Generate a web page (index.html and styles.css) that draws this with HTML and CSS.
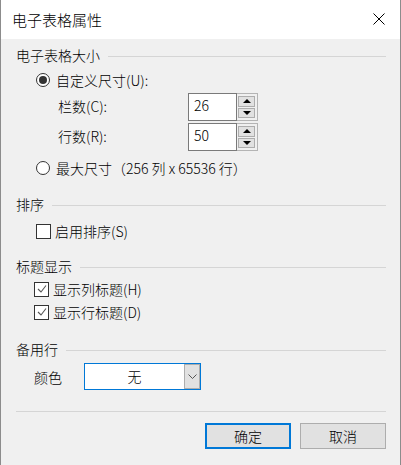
FILE: index.html
```html
<!DOCTYPE html>
<html lang="zh-CN">
<head>
<meta charset="utf-8">
<link rel="stylesheet" href="styles.css">
</head>
<body>
<div class="window">
  <div class="titlebar">
    <span class="title">电子表格属性</span>
    <svg class="close" width="12" height="12" viewBox="0 0 12 12"><path d="M0.5 0.5 L11.5 11.5 M11.5 0.5 L0.5 11.5" stroke="#000" stroke-width="1" fill="none"/></svg>
  </div>
  <div class="content">
    <div class="group-head h1"><span>电子表格大小</span><div class="rule"></div></div>
    <div class="row radio-row r1"><span class="radio checked"></span><span>自定义尺寸(U):</span></div>
    <div class="row spin-row s1">
      <span class="spin-label">栏数(C):</span>
      <div class="spinner">
        <div class="spin-text">26</div>
        <div class="spin-btns">
          <div class="spin-btn"><svg width="8" height="4" viewBox="0 0 8 4"><path d="M0 4 L4 0 L8 4 Z" fill="#000"/></svg></div>
          <div class="spin-btn"><svg width="8" height="4" viewBox="0 0 8 4"><path d="M0 0 L4 4 L8 0 Z" fill="#000"/></svg></div>
        </div>
      </div>
    </div>
    <div class="row spin-row s2">
      <span class="spin-label">行数(R):</span>
      <div class="spinner">
        <div class="spin-text">50</div>
        <div class="spin-btns">
          <div class="spin-btn"><svg width="8" height="4" viewBox="0 0 8 4"><path d="M0 4 L4 0 L8 4 Z" fill="#000"/></svg></div>
          <div class="spin-btn"><svg width="8" height="4" viewBox="0 0 8 4"><path d="M0 0 L4 4 L8 0 Z" fill="#000"/></svg></div>
        </div>
      </div>
    </div>
    <div class="row radio-row r2"><span class="radio"></span><span>最大尺寸（256 列 x 65536 行）</span></div>

    <div class="group-head h2"><span>排序</span><div class="rule"></div></div>
    <div class="row check-row c1"><span class="check"></span><span>启用排序(S)</span></div>

    <div class="group-head h3"><span>标题显示</span><div class="rule"></div></div>
    <div class="row check-row c2">
      <span class="check"><svg width="12" height="12" viewBox="0 0 12 12"><path d="M2 6 L5 9 L10 2.5" stroke="#555" stroke-width="1.1" fill="none"/></svg></span><span>显示列标题(H)</span>
    </div>
    <div class="row check-row c3">
      <span class="check"><svg width="12" height="12" viewBox="0 0 12 12"><path d="M2 6 L5 9 L10 2.5" stroke="#555" stroke-width="1.1" fill="none"/></svg></span><span>显示行标题(D)</span>
    </div>

    <div class="group-head h4"><span>备用行</span><div class="rule"></div></div>
    <div class="row color-row">
      <span class="color-label">颜色</span>
      <div class="combo">
        <div class="combo-text">无</div>
        <div class="combo-btn"><svg width="9" height="5" viewBox="0 0 9 5"><path d="M0.5 0.5 L4.5 4.5 L8.5 0.5" stroke="#555" stroke-width="1" fill="none"/></svg></div>
      </div>
    </div>

    <div class="sep"></div>
    <div class="buttons">
      <div class="btn default">确定</div>
      <div class="btn">取消</div>
    </div>
  </div>
</div>
</body>
</html>
```

FILE: styles.css
```css
html, body {
  margin: 0;
  padding: 0;
  background: #f0f0f0;
}
body {
  width: 401px;
  height: 465px;
  overflow: hidden;
  font-family: "Noto Sans CJK SC", "Noto Sans", sans-serif;
  font-size: 14px;
  font-weight: 300;
  color: #000;
}
.window {
  width: 399px;
  height: 465px;
  border-left: 1px solid #8c8c8c;
  border-right: 1px solid #8c8c8c;
  background: #f0f0f0;
  display: flex;
  flex-direction: column;
}
.titlebar {
  height: 39px;
  background: #fff;
  display: flex;
  align-items: center;
  justify-content: space-between;
  padding: 0 15px 0 11px;
  flex-shrink: 0;
}
.title {
  font-size: 15px;
  line-height: 20px;
}
.close {
  display: block;
  margin-top: -1px;
}
.content {
  padding: 6px 14px 0 15px;
  display: flex;
  flex-direction: column;
}
.group-head {
  height: 20px;
  display: flex;
  align-items: center;
  line-height: 20px;
}
.group-head .rule {
  flex: 1;
  height: 1px;
  background: #d5d5d5;
  margin-left: 8px;
  margin-top: 3px;
}
.row {
  display: flex;
  align-items: center;
  line-height: 20px;
}
.radio-row, .check-row {
  height: 20px;
}
.r1 { margin-top: 5px; padding-left: 20px; }
.r2 { margin-top: 7px; padding-left: 20px; }
.radio {
  width: 12px;
  height: 12px;
  border: 1px solid #333;
  border-radius: 50%;
  background: #fff;
  margin-right: 6px;
  position: relative;
  box-sizing: content-box;
}
.radio.checked::after {
  content: "";
  position: absolute;
  left: 2px;
  top: 2px;
  width: 8px;
  height: 8px;
  border-radius: 50%;
  background: #333;
}
.spin-row {
  height: 28px;
  padding-left: 42px;
}
.s1 { margin-top: 3px; }
.s2 { margin-top: 2px; }
.spin-label {
  width: 130px;
  margin-top: -3px;
}
.spinner {
  display: flex;
  width: 70px;
  height: 28px;
  box-sizing: border-box;
}
.spin-text {
  width: 49px;
  height: 28px;
  box-sizing: border-box;
  border: 1px solid #7a7a7a;
  background: #fff;
  padding-left: 5px;
  font-size: 14px;
  line-height: 22px;
}
.spin-btns {
  width: 21px;
  height: 28px;
  box-sizing: border-box;
  border: 1px solid #b4b4b4;
  border-left: none;
  background: #f0f0f0;
  display: flex;
  flex-direction: column;
  padding: 2px 2px 2px 1px;
  gap: 1px;
}
.spin-btn {
  flex: 1;
  background: #e1e1e1;
  border: 1px solid #adadad;
  display: flex;
  align-items: center;
  justify-content: center;
}
.spin-btn svg { display: block; }
.h2 { margin-top: 16px; }
.h3 { margin-top: 15px; }
.h4 { margin-top: 17px; }
.c1 { margin-top: 7px; padding-left: 20px; }
.c2 { margin-top: 3px; padding-left: 18px; }
.c3 { margin-top: 3px; padding-left: 18px; }
.check {
  width: 13px;
  height: 13px;
  border: 1px solid #333;
  background: #fff;
  margin-right: 4px;
  display: flex;
  align-items: center;
  justify-content: center;
  box-sizing: content-box;
}
.check svg { display: block; }
.color-row {
  height: 27px;
  margin-top: 4px;
  padding-left: 18px;
}
.color-label {
  width: 50px;
}
.combo {
  width: 117px;
  height: 27px;
  box-sizing: border-box;
  border: 1px solid #0078d7;
  background: #fff;
  display: flex;
}
.combo-text {
  flex: 1;
  text-align: center;
  line-height: 25px;
}
.combo-btn {
  width: 16px;
  height: 25px;
  box-sizing: border-box;
  background: #e1e1e1;
  border: 1px solid #adadad;
  display: flex;
  align-items: center;
  justify-content: center;
}
.combo-btn svg { display: block; }
.sep {
  height: 1px;
  background: #d5d5d5;
  margin-top: 21px;
}
.buttons {
  display: flex;
  justify-content: flex-end;
  gap: 9px;
  margin-top: 11px;
}
.btn {
  width: 86px;
  height: 26px;
  box-sizing: border-box;
  border: 1px solid #adadad;
  background: #e1e1e1;
  text-align: center;
  line-height: 24px;
}
.btn.default {
  border: 2px solid #0078d7;
  line-height: 22px;
}
```
